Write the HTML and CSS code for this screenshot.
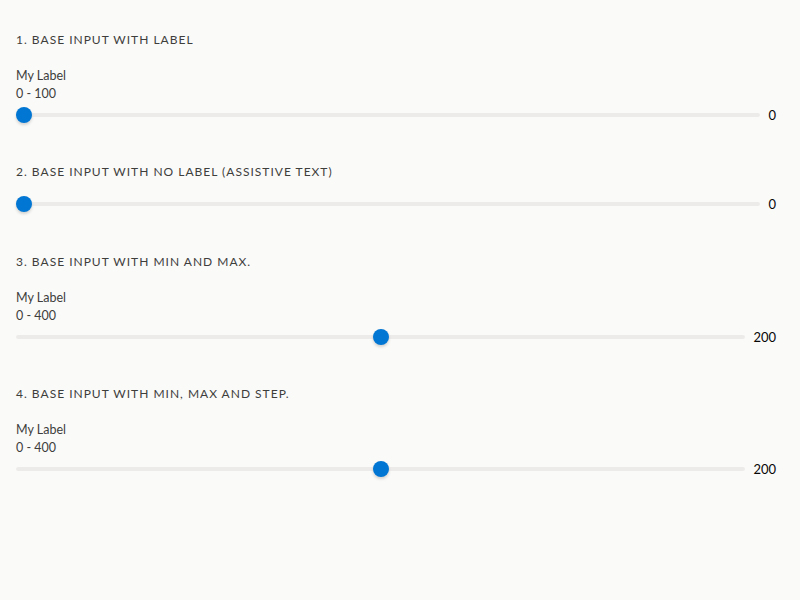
FILE: index.html
```html
<!DOCTYPE html>
<html lang="en">
<head>
<meta charset="utf-8">
<title>Slider</title>
<link rel="stylesheet" href="styles.css">
</head>
<body>
<div class="page">
  <section class="section">
    <h2 class="title-caps">1. Base Input with label</h2>
    <div class="labels">
      <div class="label">My Label</div>
      <div class="range">0 - 100</div>
    </div>
    <div class="slider">
      <input class="slider-input" type="range" min="0" max="100" value="0">
      <span class="slider-value">0</span>
    </div>
  </section>
  <section class="section section-plain">
    <h2 class="title-caps">2. Base Input with no label (assistive text)</h2>
    <div class="slider">
      <input class="slider-input" type="range" min="0" max="100" value="0">
      <span class="slider-value">0</span>
    </div>
  </section>
  <section class="section">
    <h2 class="title-caps">3. Base Input with min and max.</h2>
    <div class="labels">
      <div class="label">My Label</div>
      <div class="range">0 - 400</div>
    </div>
    <div class="slider">
      <input class="slider-input" type="range" min="0" max="400" value="200">
      <span class="slider-value">200</span>
    </div>
  </section>
  <section class="section">
    <h2 class="title-caps">4. Base Input with min, max and step.</h2>
    <div class="labels">
      <div class="label">My Label</div>
      <div class="range">0 - 400</div>
    </div>
    <div class="slider">
      <input class="slider-input" type="range" min="0" max="400" step="100" value="200">
      <span class="slider-value">200</span>
    </div>
  </section>
</div>
</body>
</html>
```

FILE: styles.css
```css
html, body {
  margin: 0;
  padding: 0;
  background: #fafaf9;
}
body {
  font-family: "Lato", "Liberation Sans", sans-serif;
  color: #080707;
  font-size: 13px;
}
.page {
  padding: 32px 16px 16px;
}
.section {
  margin-bottom: 36px;
}
.section-plain {
  margin-bottom: 37px;
}
.title-caps {
  margin: 0 0 12px;
  font-size: 12px;
  font-weight: 400;
  line-height: 15px;
  letter-spacing: 1px;
  text-transform: uppercase;
  color: #3e3e3c;
}
.labels {
  padding-top: 8px;
  margin-bottom: -1px;
}
.label, .range {
  font-size: 12.5px;
  line-height: 18px;
  color: #3e3e3c;
}
.slider {
  display: flex;
  align-items: center;
  height: 26px;
}
.slider-input {
  -webkit-appearance: none;
  appearance: none;
  flex: 1;
  margin: 0;
  height: 16px;
  background: transparent;
}
.slider-input::-webkit-slider-runnable-track {
  height: 4px;
  border-radius: 2px;
  background: #ecebea;
}
.slider-input::-webkit-slider-thumb {
  -webkit-appearance: none;
  width: 16px;
  height: 16px;
  margin-top: -6px;
  border-radius: 50%;
  background: #0176d3;
  box-shadow: 0 2px 3px rgba(0, 0, 0, 0.16);
  border: 0;
}
.slider-value {
  padding: 0 8px;
  font-size: 13px;
  color: #080707;
}
```
